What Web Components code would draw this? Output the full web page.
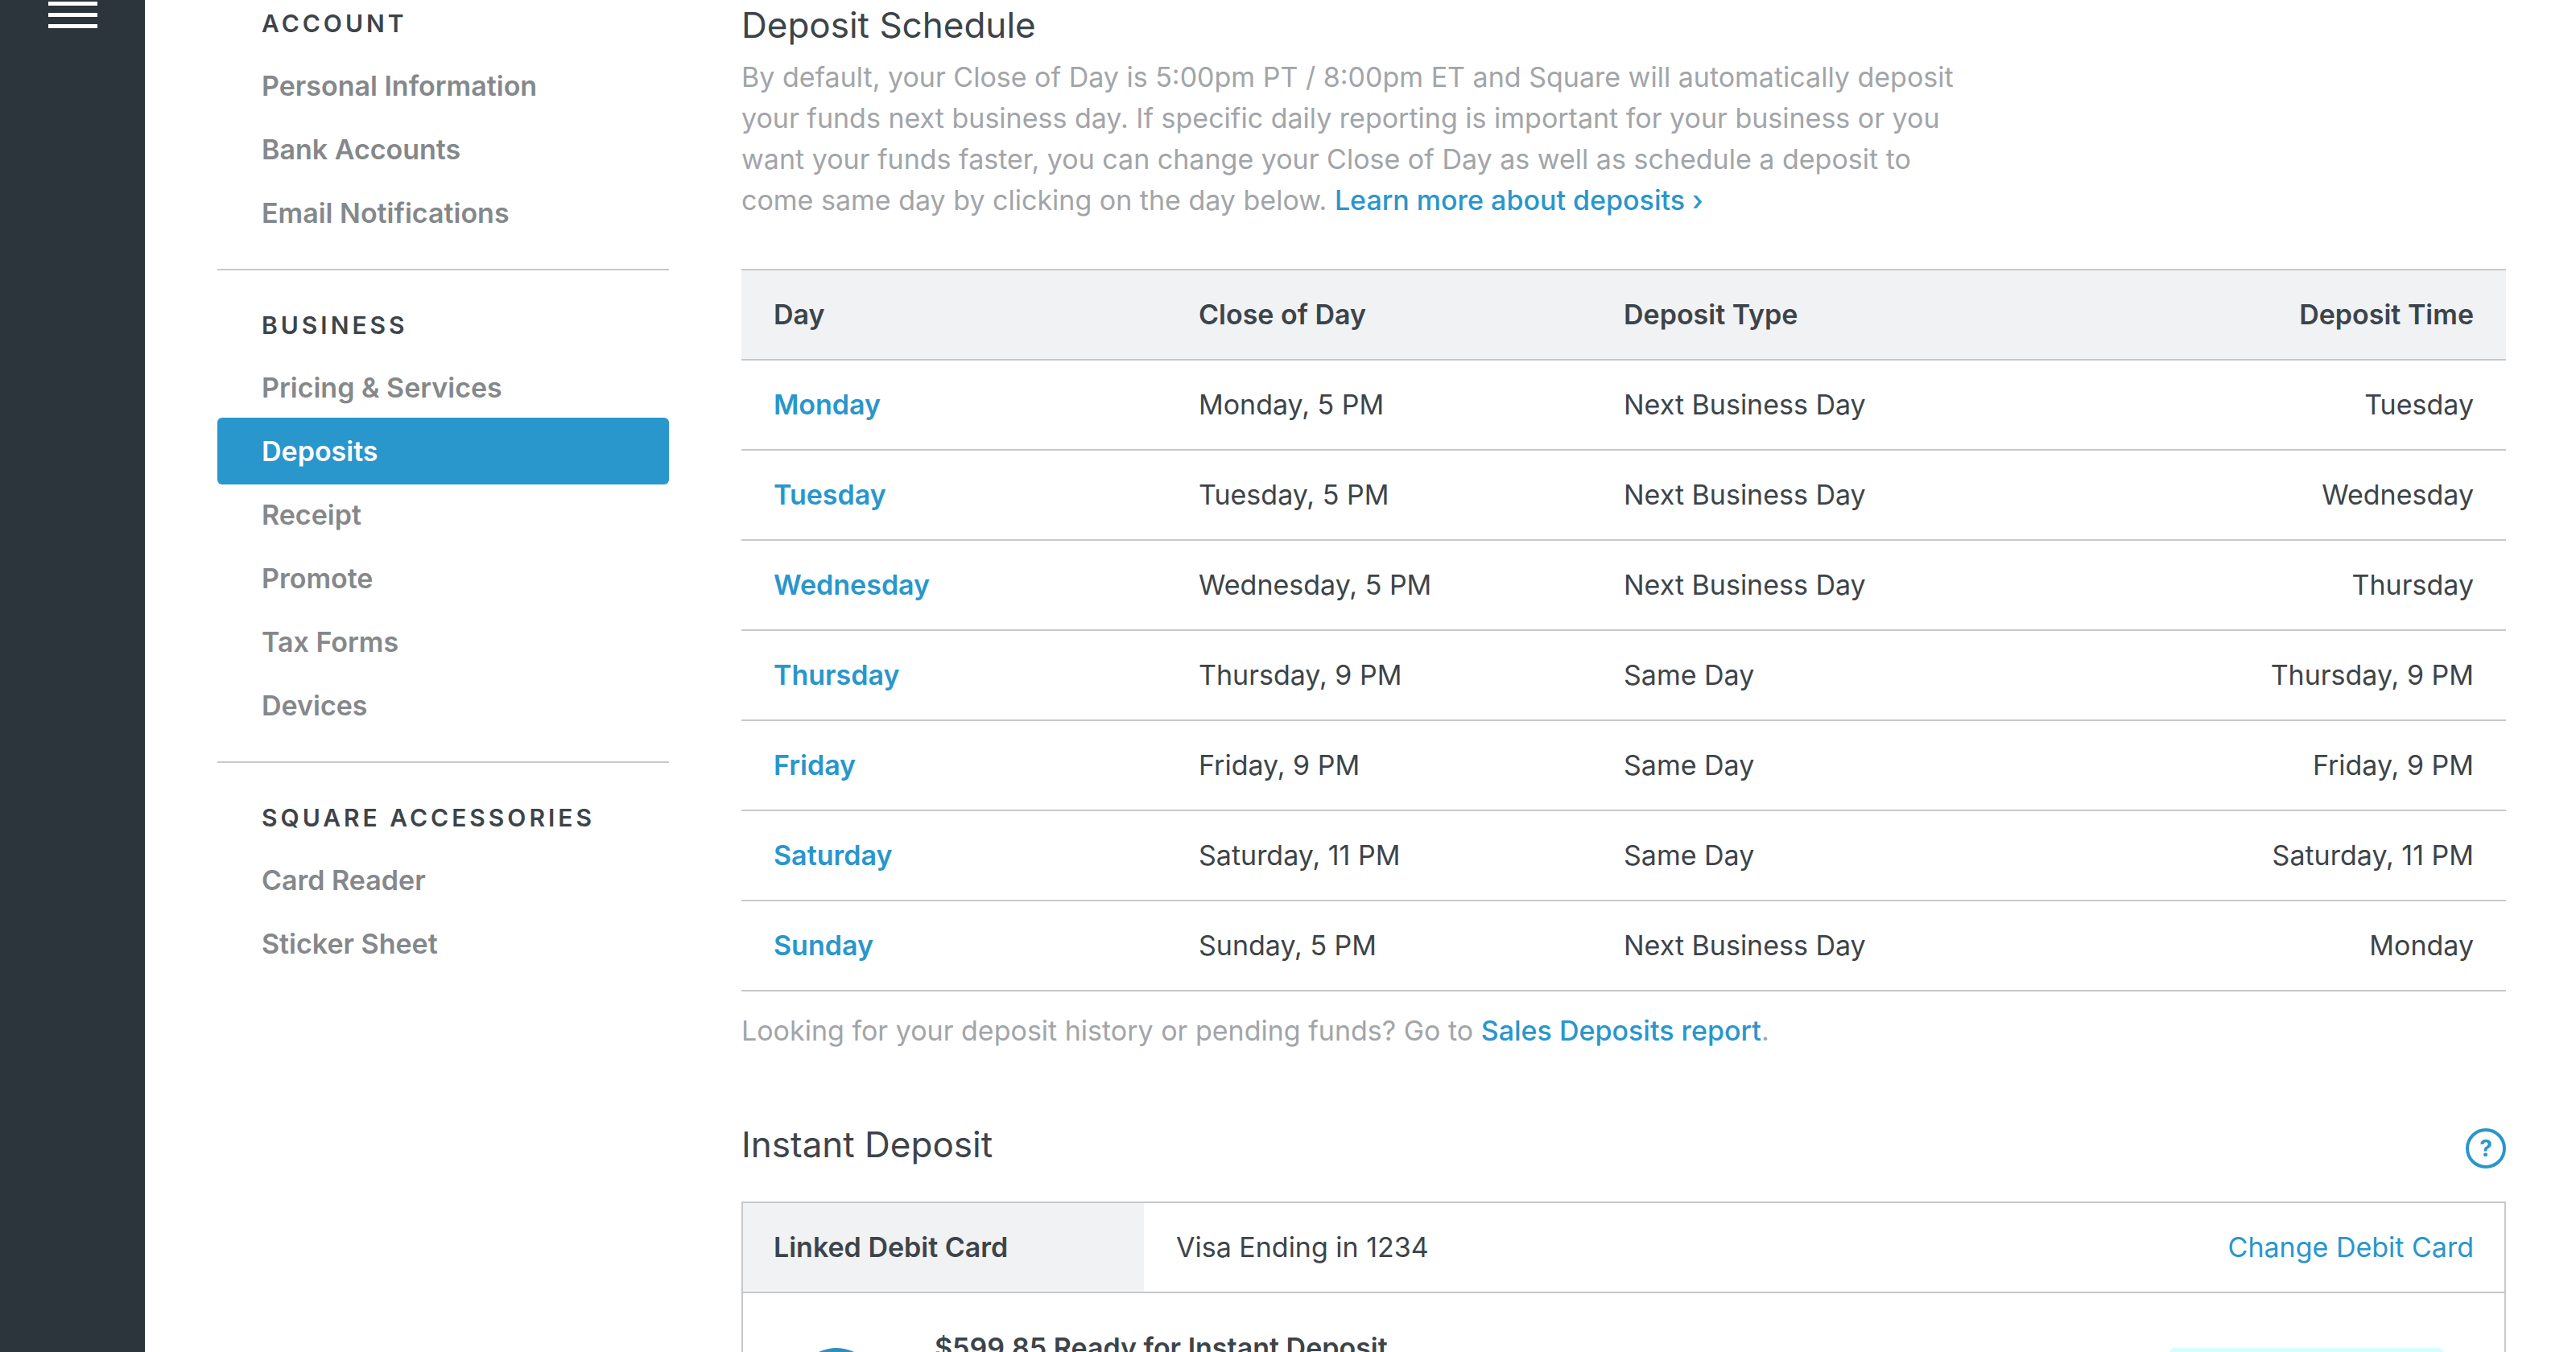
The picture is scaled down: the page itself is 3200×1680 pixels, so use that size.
<!DOCTYPE html>
<html lang="en">
<head>
<meta charset="utf-8">
<title>Deposits</title>
<style>
  html, body { margin: 0; height: 100%; }
  body {
    overflow: hidden;
    background: #fff;
    color: #3d4449;
    font: 400 34px/52px Inter, "Liberation Sans", sans-serif;
    --blue: #2996cc;
    --line: #c6c8ca;
    --shade: #f0f2f4;
    --muted: #a2a5a8;
  }
</style>
</head>
<body>
<deposits-page></deposits-page>

<script>
const define = (name, html, setup) => {
  const template = document.createElement('template');
  template.innerHTML = html;
  customElements.define(name, class extends HTMLElement {
    connectedCallback() {
      if (this.shadowRoot) return;
      this.attachShadow({ mode: 'open' }).append(template.content.cloneNode(true));
      if (setup) setup(this, this.shadowRoot);
    }
  });
};

define('nav-rail', `
  <style>
    :host { display: flex; flex: none; width: 180px; flex-direction: column; align-items: center; background: #2d353c; }
    button { display: flex; flex-direction: column; gap: 9px; width: 61px; margin: 2px 0 0; padding: 0; border: 0; background: none; }
    span { height: 5px; background: #fff; }
  </style>
  <button type="button" aria-label="Open menu"><span></span><span></span><span></span></button>
`);

define('nav-item', `
  <style>
    :host { display: block; }
    a { display: block; padding: 2px 55px 1px; line-height: 76px; font-weight: 600; color: #85888a; text-decoration: none; }
    :host([current]) a { height: 83px; margin: -2px 0; padding: 0 55px; line-height: 83px; border-radius: 6px; background: var(--blue); color: #fff; }
  </style>
  <a href="#"><slot></slot></a>
`);

define('nav-group', `
  <style>
    :host { display: block; padding: 30px 0; border-bottom: 2px solid var(--line); }
    :host(:last-child) { border-bottom: 0; }
    h2 { margin: 0; padding: 0 0 0 55px; font-size: 30px; line-height: 76px; font-weight: 600; letter-spacing: 4px; white-space: nowrap; text-transform: uppercase; }
  </style>
  <h2></h2>
  <nav><slot></slot></nav>
`, (host, root) => {
  root.querySelector('h2').textContent = host.getAttribute('heading');
});

define('settings-nav', `
  <style>
    :host { display: block; flex: none; width: 561px; margin-top: -39px; }
  </style>
  <nav-group heading="Account">
    <nav-item>Personal Information</nav-item>
    <nav-item>Bank Accounts</nav-item>
    <nav-item>Email Notifications</nav-item>
  </nav-group>
  <nav-group heading="Business">
    <nav-item>Pricing &amp; Services</nav-item>
    <nav-item current>Deposits</nav-item>
    <nav-item>Receipt</nav-item>
    <nav-item>Promote</nav-item>
    <nav-item>Tax Forms</nav-item>
    <nav-item>Devices</nav-item>
  </nav-group>
  <nav-group heading="Square Accessories">
    <nav-item>Card Reader</nav-item>
    <nav-item>Sticker Sheet</nav-item>
  </nav-group>
`);

define('schedule-table', `
  <style>
    :host { display: block; }
    table { width: 100%; table-layout: fixed; border-collapse: collapse; }
    tr { border-bottom: 2px solid var(--line); }
    thead tr { border-top: 2px solid var(--line); background: var(--shade); }
    th, td { height: 110px; padding: 0 0 0 40px; text-align: left; font-weight: 400; line-height: 52px; }
    th:nth-child(n+1):nth-child(-n+3) { width: 488px; }
    th:last-child, td:last-child { padding: 0 40px 0 0; text-align: right; }
    thead th, tbody th { font-weight: 600; }
    a { color: var(--blue); text-decoration: none; }
  </style>
  <table>
    <thead><tr><th scope="col">Day</th><th scope="col">Close of Day</th><th scope="col">Deposit Type</th><th scope="col">Deposit Time</th></tr></thead>
    <tbody></tbody>
  </table>
`, (host, root) => {
  const rows = [
    ['Monday', 'Monday, 5 PM', 'Next Business Day', 'Tuesday'],
    ['Tuesday', 'Tuesday, 5 PM', 'Next Business Day', 'Wednesday'],
    ['Wednesday', 'Wednesday, 5 PM', 'Next Business Day', 'Thursday'],
    ['Thursday', 'Thursday, 9 PM', 'Same Day', 'Thursday, 9 PM'],
    ['Friday', 'Friday, 9 PM', 'Same Day', 'Friday, 9 PM'],
    ['Saturday', 'Saturday, 11 PM', 'Same Day', 'Saturday, 11 PM'],
    ['Sunday', 'Sunday, 5 PM', 'Next Business Day', 'Monday']
  ];
  root.querySelector('tbody').innerHTML = rows.map(([day, ...rest]) =>
    `<tr><th scope="row"><a href="#">${day}</a></th>${rest.map(text => `<td>${text}</td>`).join('')}</tr>`
  ).join('');
});

define('deposit-schedule', `
  <style>
    :host { display: block; }
    h1 { margin: 0; font-size: 44px; line-height: 62px; font-weight: 400; }
    p { margin: 0; color: var(--muted); line-height: 51px; }
    .intro { max-width: 1540px; margin: 8px 0 60px; }
    .after { margin-top: 23px; }
    a { color: var(--blue); text-decoration: none; font-weight: 500; }
  </style>
  <h1>Deposit Schedule</h1>
  <p class="intro">By default, your Close of Day is 5:00pm PT / 8:00pm ET and Square will automatically deposit your funds next business day. If specific daily reporting is important for your business or you want your funds faster, you can change your Close of Day as well as schedule a deposit to come same day by clicking on the day below. <a href="#">Learn more about deposits ›</a></p>
  <schedule-table></schedule-table>
  <p class="after">Looking for your deposit history or pending funds? Go to <a href="#">Sales Deposits report</a>.</p>
`);

define('instant-deposit', `
  <style>
    :host { display: block; }
    header { display: flex; justify-content: space-between; align-items: flex-end; margin-bottom: 41px; }
    h1 { margin: 0; font-size: 44px; line-height: 60px; font-weight: 400; }
    .help { box-sizing: border-box; width: 50px; height: 50px; padding: 0; border: 4px solid var(--blue); border-radius: 50%; background: none; color: var(--blue); font: 700 28px/42px Inter, sans-serif; text-align: center; }
    .card { border: 2px solid var(--line); }
    .linked { display: flex; align-items: stretch; line-height: 110px; border-bottom: 2px solid var(--line); }
    .label { flex: none; box-sizing: border-box; width: 498px; padding-left: 38px; background: var(--shade); font-weight: 600; }
    .value { flex: 1; padding-left: 40px; }
    a { margin-right: 38px; color: var(--blue); text-decoration: none; }
    .ready { display: flex; align-items: flex-start; height: 220px; padding: 42px 76px 0 66px; }
    svg { flex: none; margin-top: 26px; }
    .ready strong { flex: 1; margin-left: 72px; font-weight: 600; }
    .go { width: 340px; height: 80px; margin-top: 26px; border: 0; border-radius: 6px; background: #d5ffff; }
  </style>
  <header><h1>Instant Deposit</h1><button class="help" type="button" aria-label="Help">?</button></header>
  <div class="card">
    <div class="linked"><div class="label">Linked Debit Card</div><div class="value">Visa Ending in 1234</div><a href="#">Change Debit Card</a></div>
    <div class="ready">
      <svg width="100" height="100" viewBox="0 0 100 100" aria-hidden="true"><circle cx="50" cy="50" r="50" fill="#2e8fc0"/></svg>
      <strong>$599.85 Ready for Instant Deposit</strong>
      <button class="go" type="button" aria-label="Deposit now"></button>
    </div>
  </div>
`);

define('deposits-page', `
  <style>
    :host { display: flex; height: 100%; overflow: hidden; }
    settings-nav { margin-left: 90px; }
    main { flex: 1; min-width: 0; margin-left: 90px; padding-right: 87px; }
    instant-deposit { margin-top: 86px; }
  </style>
  <nav-rail></nav-rail>
  <settings-nav></settings-nav>
  <main>
    <deposit-schedule></deposit-schedule>
    <instant-deposit></instant-deposit>
  </main>
`);
</script>
</body>
</html>
